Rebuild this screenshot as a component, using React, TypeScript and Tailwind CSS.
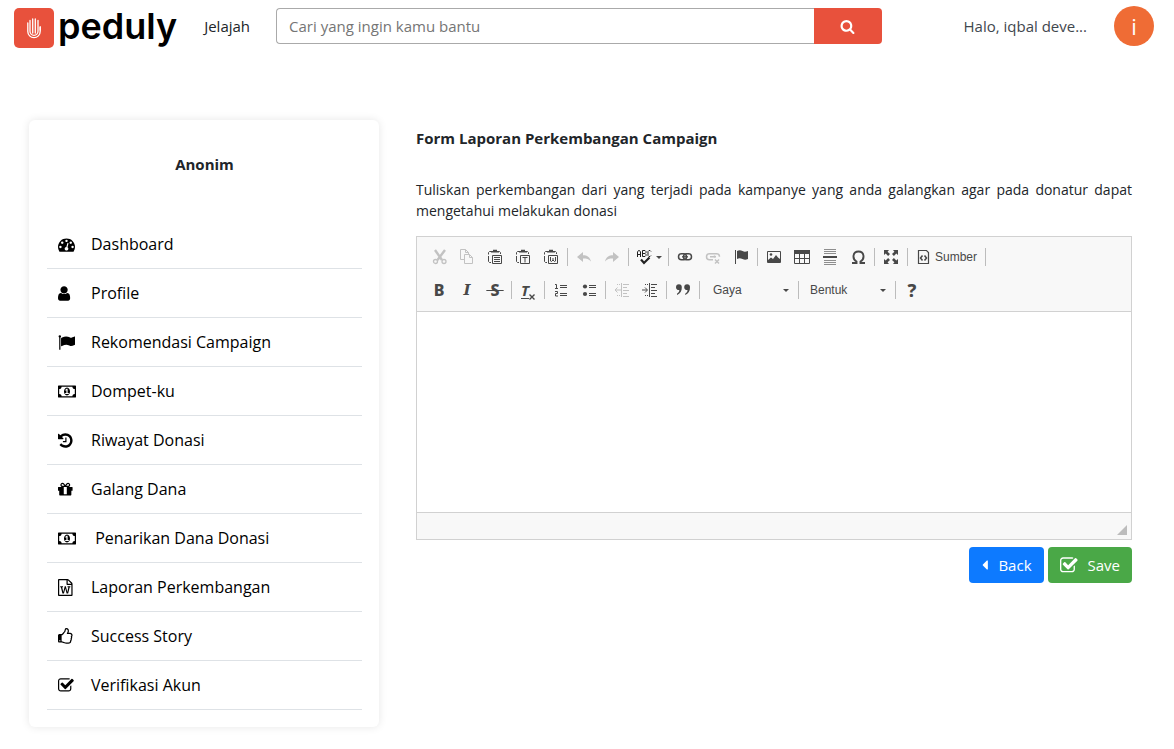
import React, { useState } from "react";

type IconProps = { d: string; className?: string; wide?: boolean };

function Glyph({ d, className = "h-4 w-4", wide }: IconProps) {
  return (
    <svg viewBox={wide ? "0 0 1920 1792" : "0 0 1792 1792"} className={className} fill="currentColor" aria-hidden="true">
      <path d={d} />
    </svg>
  );
}

const paths = {
  dashboard:
    "M384 1152q0-53-37.5-90.5t-90.5-37.5-90.5 37.5-37.5 90.5 37.5 90.5 90.5 37.5 90.5-37.5 37.5-90.5zm192-448q0-53-37.5-90.5t-90.5-37.5-90.5 37.5-37.5 90.5 37.5 90.5 90.5 37.5 90.5-37.5 37.5-90.5zm428 481l101-382q6-26-7.5-48.5t-38.5-29.5-48 6.5-30 39.5l-101 382q-60 5-107 43.5t-63 98.5q-20 77 20 146t117 89 146-20 89-117q16-60-6-117t-72-91zm660-33q0-53-37.5-90.5t-90.5-37.5-90.5 37.5-37.5 90.5 37.5 90.5 90.5 37.5 90.5-37.5 37.5-90.5zm-640-640q0-53-37.5-90.5t-90.5-37.5-90.5 37.5-37.5 90.5 37.5 90.5 90.5 37.5 90.5-37.5 37.5-90.5zm448 192q0-53-37.5-90.5t-90.5-37.5-90.5 37.5-37.5 90.5 37.5 90.5 90.5 37.5 90.5-37.5 37.5-90.5zm320 448q0 261-141 483-19 29-54 29h-1402q-35 0-54-29-141-221-141-483 0-182 71-348t191-286 286-191 348-71 348 71 286 191 191 286 71 348z",
  user: "M1280 1399q0 109-62.5 187t-150.5 78h-854q-88 0-150.5-78t-62.5-187q0-85 8.5-160.5t31.5-152 58.5-131 94-89 134.5-34.5q131 128 313 128t313-128q76 0 134.5 34.5t94 89 58.5 131 31.5 152 8.5 160.5zm-256-887q0 159-112.5 271.5t-271.5 112.5-271.5-112.5-112.5-271.5 112.5-271.5 271.5-112.5 271.5 112.5 112.5 271.5z",
  flag: "M320 256q0 72-64 110v1266q0 13-9.5 22.5t-22.5 9.5h-64q-13 0-22.5-9.5t-9.5-22.5v-1266q-64-38-64-110 0-53 37.5-90.5t90.5-37.5 90.5 37.5 37.5 90.5zm1472 64v763q0 25-12.5 38.5t-39.5 27.5q-215 116-369 116-61 0-123.5-22t-108.5-48-115.5-48-142.5-22q-192 0-464 146-17 9-33 9-26 0-45-19t-19-45v-742q0-32 31-55 21-14 79-43 236-120 421-120 107 0 200 29t219 88q38 19 88 19 54 0 117.5-21t110-47 88-47 54.5-21q26 0 45 19t19 45z",
  money:
    "M768 1152h384v-96h-128v-448h-114l-148 137 77 80q42-37 55-57h2v288h-128v96zm512-256q0 70-21 142t-59.5 134-101.5 101-138 39-138-39-101.5-101-59.5-134-21-142 21-142 59.5-134 101.5-101 138-39 138 39 101.5 101 59.5 134 21 142zm512 256v-512q-106 0-181-75t-75-181h-1152q0 106-75 181t-181 75v512q106 0 181 75t75 181h1152q0-106 75-181t181-75zm128-832v1152q0 26-19 45t-45 19h-1792q-26 0-45-19t-19-45v-1152q0-26 19-45t45-19h1792q26 0 45 19t19 45z",
  history:
    "M1536 896q0 156-61 298t-164 245-245 164-298 61q-172 0-327-72.5t-264-204.5q-7-10-6.5-22.5t8.5-20.5l137-138q10-9 25-9 16 2 23 12 73 95 179 147t225 52q104 0 198.5-40.5t163.5-109.5 109.5-163.5 40.5-198.5-40.5-198.5-109.5-163.5-163.5-109.5-198.5-40.5q-98 0-188 35.5t-160 101.5l137 138q31 30 14 69-17 40-59 40h-448q-26 0-45-19t-19-45v-448q0-42 40-59 39-17 69 14l130 129q107-101 244.5-156.5t284.5-55.5q156 0 298 61t245 164 164 245 61 298zm-640-288v448q0 14-9 23t-23 9h-320q-14 0-23-9t-9-23v-64q0-14 9-23t23-9h224v-352q0-14 9-23t23-9h64q14 0 23 9t9 23z",
  gift: "M928 1356v-716h-320v716q0 25 18 38.5t46 13.5h192q28 0 46-13.5t18-38.5zm-456-844h195l-126-161q-26-31-69-31-40 0-68 28t-28 68 28 68 68 28zm688-96q0-40-28-68t-68-28q-43 0-69 31l-125 161h194q40 0 68-28t28-68zm376 256v320q0 14-9 23t-23 9h-96v416q0 40-28 68t-68 28h-1088q-40 0-68-28t-28-68v-416h-96q-14 0-23-9t-9-23v-320q0-14 9-23t23-9h440q-93 0-158.5-65.5t-65.5-158.5 65.5-158.5 158.5-65.5q107 0 168 77l128 165 128-165q61-77 168-77 93 0 158.5 65.5t65.5 158.5-65.5 158.5-158.5 65.5h440q14 0 23 9t9 23z",
  word: "M1468 380q28 28 48 76t20 88v1152q0 40-28 68t-68 28h-1344q-40 0-68-28t-28-68v-1600q0-40 28-68t68-28h896q40 0 88 20t76 48zm-444-244v376h376q-10-29-22-41l-313-313q-12-12-41-22zm384 1528v-1024h-416q-40 0-68-28t-28-68v-416h-768v1536h1280zm-1175-896v107h70l164 661h159l128-485q7-20 10-46 2-16 2-24h4l3 24q1 3 3.5 20t5.5 26l128 485h159l164-661h70v-107h-300v107h90l-99 438q-5 20-7 46l-2 21h-4q0-3-.5-6.5t-1.5-8-1-6.5q-1-5-4-21t-5-25l-144-545h-114l-144 545q-2 9-4.5 24.5t-3.5 21.5l-4 21h-4l-2-21q-2-26-7-46l-99-438h90v-107h-300z",
  thumb:
    "M256 1344q0-26-19-45t-45-19-45 19-19 45 19 45 45 19 45-19 19-45zm1152-576q0-51-39-89.5t-89-38.5h-352q0-58 48-159.5t48-160.5q0-98-32-145t-128-47q-26 26-38 85t-30.5 125.5-59.5 109.5q-22 23-77 91-4 5-23 30t-31.5 41-34.5 42.5-40 44-38.5 35.5-40 27-35.5 9h-32v640h32q13 0 31.5 3t33 6.5 38 11 35 11.5 35.5 12.5 29 10.5q211 73 342 73h121q192 0 192-167 0-26-5-56 30-16 47.5-52.5t17.5-73.5-18-69q53-50 53-119 0-25-10-55.5t-25-47.5q32-1 53.5-47t21.5-81zm128-1q0 89-49 163 9 33 9 69 0 77-38 144 3 21 3 43 0 101-60 178 1 139-85 219.5t-227 80.5h-129q-96 0-189.5-22.5t-216.5-65.5q-116-40-138-40h-288q-53 0-90.5-37.5t-37.5-90.5v-640q0-53 37.5-90.5t90.5-37.5h274q36-24 137-155 58-75 107-128 24-25 35.5-85.5t30.5-126.5 62-108q39-37 90-37 84 0 151 32.5t102 101.5 35 186q0 93-48 192h176q104 0 180 76t76 179z",
  check:
    "M1408 930v318q0 119-84.5 203.5t-203.5 84.5h-832q-119 0-203.5-84.5t-84.5-203.5v-832q0-119 84.5-203.5t203.5-84.5h832q63 0 117 25 15 7 18 23 3 17-9 29l-49 49q-10 10-23 10-3 0-9-2-23-6-45-6h-832q-66 0-113 47t-47 113v832q0 66 47 113t113 47h832q66 0 113-47t47-113v-254q0-13 9-22l64-64q10-10 23-10 6 0 12 3 20 8 20 29zm231-489l-814 814q-24 24-57 24t-57-24l-430-430q-24-24-24-57t24-57l110-110q24-24 57-24t57 24l263 263 647-647q24-24 57-24t57 24l110 110q24 24 24 57t-24 57z",
  search:
    "M1216 832q0-185-131.5-316.5t-316.5-131.5-316.5 131.5-131.5 316.5 131.5 316.5 316.5 131.5 316.5-131.5 131.5-316.5zm512 832q0 52-38 90t-90 38q-54 0-90-38l-343-342q-179 124-399 124-143 0-273.5-55.5t-225-150-150-225-55.5-273.5 55.5-273.5 150-225 225-150 273.5-55.5 273.5 55.5 225 150 150 225 55.5 273.5q0 220-124 399l343 343q37 37 37 90z",
  caretLeft:
    "M1216 448v896q0 26-19 45t-45 19-45-19l-448-448q-19-19-19-45t19-45l448-448q19-19 45-19t45 19 19 45z",
};

const menu: { label: string; d: string; wide?: boolean }[] = [
  { label: "Dashboard", d: paths.dashboard },
  { label: "Profile", d: paths.user },
  { label: "Rekomendasi Campaign", d: paths.flag },
  { label: "Dompet-ku", d: paths.money, wide: true },
  { label: "Riwayat Donasi", d: paths.history },
  { label: "Galang Dana", d: paths.gift },
  { label: "\u00a0Penarikan Dana Donasi", d: paths.money, wide: true },
  { label: "Laporan Perkembangan", d: paths.word },
  { label: "Success Story", d: paths.thumb },
  { label: "Verifikasi Akun", d: paths.check },
];

function Svg16({ children }: { children: React.ReactNode }) {
  return (
    <svg viewBox="0 0 16 16" className="h-4 w-4" fill="none" stroke="currentColor" aria-hidden="true">
      {children}
    </svg>
  );
}

function Tool({ label, disabled, children }: { label: string; disabled?: boolean; children: React.ReactNode }) {
  return (
    <button
      type="button"
      aria-label={label}
      disabled={disabled}
      className="flex h-7 w-7 items-center justify-center text-[#484848] disabled:text-[#c2c2c2]"
    >
      {children}
    </button>
  );
}

function Sep() {
  return <span className="mr-0.5 ml-0.5 h-[18px] w-px bg-[#bcbcbc]" />;
}

function Arrow() {
  return (
    <svg viewBox="0 0 6 3" className="h-[3px] w-1.5" fill="#484848" aria-hidden="true">
      <path d="M0 0h6L3 3z" />
    </svg>
  );
}

function Clipboard({ children }: { children?: React.ReactNode }) {
  return (
    <Svg16>
      <path d="M4 2.500H2.500l-1 1v2M1.500 7v5.500l1 1H4M11 2.500h1.500l1 1V5" />
      <path d="M4 3.500V2h2V.8h4V2h2v1.500z" fill="currentColor" stroke="none" />
      <path d="M5.500 6.500h9v8h-9z" />
      {children}
    </Svg16>
  );
}

function Combo({ label }: { label: string }) {
  return (
    <div className="relative flex h-7 w-[92px] items-center">
      <select
        aria-label={label}
        className="h-[26px] w-full appearance-none bg-transparent pl-[9px] font-['Liberation_Sans',sans-serif] text-xs text-[#484848]"
      >
        <option>{label}</option>
      </select>
      <span className="pointer-events-none absolute right-[7px]">
        <Arrow />
      </span>
    </div>
  );
}

function Indent({ out }: { out?: boolean }) {
  return (
    <Svg16>
      <path d="M9 2.500h6M9 5.500h4M9 8.500h6M9 11.500h4M9 14.500h6" />
      <path d="M7.500 1v14" />
      <path d="M3 2.500h3M3 13.500h3" strokeDasharray="1 1" />
      <path d={out ? "M1 8h6M3.500 5.500L1 8l2.500 2.500" : "M0 8h5M3 5.500L5.500 8 3 10.500"} />
    </Svg16>
  );
}

function Toolbar() {
  return (
    <div className="flex flex-col gap-[5px] border-b border-[#d1d1d1] bg-[#f8f8f8] px-2 pt-1.5 pb-[7px]">
      <div className="flex h-7 items-center">
        <Tool label="Potong" disabled>
          <Svg16>
            <path d="M4 1l7 10M14 1L6.500 11" strokeWidth="2.400" />
            <circle cx="4.500" cy="12.500" r="2" strokeWidth="1.300" />
            <circle cx="13" cy="12.500" r="2" strokeWidth="1.300" />
          </Svg16>
        </Tool>
        <Tool label="Salin" disabled>
          <Svg16>
            <path d="M5 10.500H1.500V.5h5l3 3V5M6.500 .5v3h3" />
            <path d="M5.500 5.500h5l3 3v6h-8zM10.500 5.500v3h3" />
          </Svg16>
        </Tool>
        <Tool label="Tempel">
          <Clipboard>
            <path d="M7 8.500h6M7 10.500h6M7 12.500h6" />
          </Clipboard>
        </Tool>
        <Tool label="Tempel sebagai teks polos">
          <Clipboard>
            <path d="M7.500 8.500h5M10 8.500v5" />
          </Clipboard>
        </Tool>
        <Tool label="Tempel dari Word">
          <Clipboard>
            <path d="M7.500 8v4l1 .5 1.500-1.500 1.500 1.500 1-.5V8M10 9v2" />
          </Clipboard>
        </Tool>
        <Sep />
        <Tool label="Batal perintah terakhir" disabled>
          <Svg16>
            <path d="M1 8l6-5v3.200c4 0 7 1.800 8 6.300-2-2.500-4.500-3-8-3V13z" fill="currentColor" stroke="none" />
          </Svg16>
        </Tool>
        <Tool label="Kembalikan perintah terakhir" disabled>
          <Svg16>
            <path d="M15 8L9 3v3.200c-4 0-7 1.800-8 6.300 2-2.500 4.500-3 8-3V13z" fill="currentColor" stroke="none" />
          </Svg16>
        </Tool>
        <Sep />
        <button type="button" aria-label="Periksa Ejaan" className="flex h-7 w-[35px] items-center gap-[3px] pl-1.5 text-[#222]">
          <Svg16>
            <path d="M.5 8V3l1-1.500h1l1 1.500v5M.5 5.500h3M5.500 1.500v6H8l1-1v-1l-1-1 1-1v-1l-1-1H5.500M5.500 4.500H8M14 2.500l-1-1h-1l-1 1v4l1 1h1l1-1" />
            <path d="M4 10.500l3 3.500 5.500-5.500" strokeWidth="2.200" />
          </Svg16>
          <Arrow />
        </button>
        <Sep />
        <Tool label="Tautan">
          <Svg16>
            <rect x="1.500" y="4.800" width="8" height="6" rx="3" strokeWidth="1.500" />
            <rect x="6.500" y="4.800" width="8" height="6" rx="3" strokeWidth="1.500" />
            <path d="M5 7.800h6" strokeWidth="1.300" />
          </Svg16>
        </Tool>
        <Tool label="Hapus Tautan" disabled>
          <Svg16>
            <path d="M8 10.800H4.500a3 3 0 010-6h7a3 3 0 013 3M9.500 6.500v2" strokeWidth="1.500" />
            <path d="M5 7.800h6M10 10.500l4 4M14 10.500l-4 4" strokeWidth="1.500" />
          </Svg16>
        </Tool>
        <Tool label="Jangkar">
          <Svg16>
            <path d="M2.500 1v14" />
            <path d="M4 2c2-1 3.500-1 5.500 0s3 .8 5.500 0v8c-2.500 1-3.500.8-5.500 0S6 9 4 10z" fill="currentColor" stroke="none" />
          </Svg16>
        </Tool>
        <Sep />
        <Tool label="Gambar">
          <Svg16>
            <path d="M1.500 2.500h13v11h-13z" />
            <circle cx="5" cy="5.500" r="1.300" fill="currentColor" stroke="none" />
            <path d="M2 13v-2l3-2.500 2 1.500 3-4 2 2.500L14 10v3z" fill="currentColor" stroke="none" />
          </Svg16>
        </Tool>
        <Tool label="Tabel">
          <Svg16>
            <path d="M.5 1.500h15v13H.5zM.5 9.500h15M5.500 5v9M10.500 5v9" />
            <path d="M0 1h16v4H0z" fill="currentColor" stroke="none" />
          </Svg16>
        </Tool>
        <Tool label="Sisip Garis Horisontal">
          <Svg16>
            <path d="M2 .5h12M2 2.500h12M2 4.500h12M2 11.500h12M2 13.500h12M2 15.500h12" strokeOpacity="0.600" />
            <path d="M1 8h14" strokeWidth="2" />
          </Svg16>
        </Tool>
        <Tool label="Sisip Karakter Khusus">
          <Svg16>
            <path d="M2 14h4.500v-1.500C2 10 2.500 2.500 8.500 2.500s6.500 7.500 2 10V14H15" strokeWidth="1.900" />
          </Svg16>
        </Tool>
        <Sep />
        <Tool label="Memperbesar">
          <Svg16>
            <path d="M1 1h5L4.600 2.700 7 5.100 5.100 7 2.700 4.600 1 6zM15 1h-5l1.400 1.700L9 5.100 10.900 7l2.400-2.400L15 6zM1 15h5l-1.400-1.700L7 10.900 5.100 9l-2.400 2.400L1 10zM15 15h-5l1.400-1.700L9 10.900 10.900 9l2.400 2.400L15 10z" fill="currentColor" stroke="none" />
          </Svg16>
        </Tool>
        <Sep />
        <button
          type="button"
          className="flex h-7 items-center gap-[3px] px-1.5 font-['Liberation_Sans',sans-serif] text-xs text-[#484848]"
        >
          <Svg16>
            <path d="M2.500 1.500h8l2 2v11h-10z" strokeWidth="1.200" />
            <path d="M6.500 6.500L4.500 9l2 2.500M8.500 6.500l2 2.500-2 2.500" strokeWidth="1.500" />
          </Svg16>
          Sumber
        </button>
        <Sep />
      </div>
      <div className="flex h-7 items-center">
        <Tool label="Huruf Tebal">
          <span className="font-['Noto_Sans',sans-serif] text-base leading-4 font-extrabold">B</span>
        </Tool>
        <Tool label="Huruf Miring">
          <span className="font-['DejaVu_Serif',serif] text-[15px] leading-4 font-bold italic">I</span>
        </Tool>
        <Tool label="Coretan Tengah">
          <span className="font-['Noto_Sans',sans-serif] text-base leading-7 font-extrabold line-through decoration-1">
            &nbsp;S&nbsp;
          </span>
        </Tool>
        <Sep />
        <Tool label="Hapus Format">
          <span className="flex items-end">
            <span className="font-['Noto_Sans',sans-serif] text-[15px] leading-7 font-bold italic underline decoration-1 underline-offset-2">
              T
            </span>
            <svg viewBox="0 0 6 6" className="mb-1 h-1.5 w-1.5" fill="none" stroke="currentColor" aria-hidden="true">
              <path d="M.5 .5l5 5M5.500 .5l-5 5" strokeWidth="1.400" />
            </svg>
          </span>
        </Tool>
        <Sep />
        <Tool label="Sisip/Hapus Daftar Bernomor">
          <Svg16>
            <path d="M7 3.500h7M7 5.500h7M7 11.500h7M7 13.500h7" />
            <path d="M2 2.500h1.500V7M2 6.500h3M2 9.500h2.500v2h-2v2.500H5" />
          </Svg16>
        </Tool>
        <Tool label="Sisip/Hapus Daftar Bullet">
          <Svg16>
            <path d="M8 3.500h7M8 5.500h7M8 11.500h7M8 13.500h7" />
            <circle cx="4" cy="4.500" r="2.100" fill="currentColor" stroke="none" />
            <circle cx="4" cy="12" r="2.100" fill="currentColor" stroke="none" />
          </Svg16>
        </Tool>
        <Sep />
        <Tool label="Kurangi Indentasi" disabled>
          <Indent out />
        </Tool>
        <Tool label="Tingkatkan Indentasi">
          <Indent />
        </Tool>
        <Sep />
        <Tool label="Kutipan Blok">
          <Svg16>
            <path d="M1 5.200a2.900 2.900 0 115.800 0C7 9 5.200 11.500 2 13v-1.300C3.800 10.500 4.300 9.500 4.300 8 2.500 8.300 1 7 1 5.200zM9.200 5.200a2.900 2.900 0 115.800 0c.2 3.800-1.600 6.300-4.800 7.800v-1.300c1.800-1.200 2.300-2.200 2.300-3.700-1.800.3-3.300-1-3.300-2.800z" fill="currentColor" stroke="none" />
          </Svg16>
        </Tool>
        <Sep />
        <div className="flex items-center pl-0.5">
          <Combo label="Gaya" />
          <Sep />
          <Combo label="Bentuk" />
        </div>
        <Sep />
        <Tool label="Tentang CKEditor">
          <span className="font-['Noto_Sans',sans-serif] text-lg leading-4 font-extrabold">?</span>
        </Tool>
      </div>
    </div>
  );
}

function Header() {
  return (
    <header className="flex h-[52px] items-center pr-5 pl-3.5">
      <a href="#home" className="flex items-start gap-1 pt-1">
        <svg viewBox="0 0 40 40" className="h-10 w-10" fill="none" aria-hidden="true">
          <rect width="40" height="40" rx="5" fill="#e8513c" />
          <g stroke="#fff" strokeWidth="1.300" strokeLinecap="round">
            <path d="M13.800 15v8.500a6.200 6.200 0 0012.400 0V19" />
            <path d="M16 12.500v10.800a4 4 0 008 0V12.500" />
            <path d="M18.700 11v14M21.300 11v14" />
            <path d="M26.200 19v3" />
          </g>
        </svg>
        <span className="font-['Inter',sans-serif] text-4xl leading-9 font-semibold text-black">peduly</span>
      </a>
      <a href="#jelajah" className="ml-[27px] text-[15px]">
        Jelajah
      </a>
      <form role="search" className="ml-[26px] flex h-9 flex-1" onSubmit={(e) => e.preventDefault()}>
        <input
          type="text"
          aria-label="Cari"
          placeholder="Cari yang ingin kamu bantu"
          className="min-w-0 flex-1 rounded-l border border-r-0 border-[#aaa] px-3 text-[15px] placeholder:text-[#757575]"
        />
        <button type="submit" aria-label="Cari" className="flex w-[68px] items-center justify-center rounded-r bg-[#e8513c] text-white">
          <Glyph d={paths.search} className="h-[15px] w-[15px]" />
        </button>
      </form>
      <span className="ml-[82px] text-[15px] text-[#3f474e]">Halo, iqbal deve...</span>
      <span className="ml-[27px] flex h-10 w-10 items-center justify-center rounded-full bg-[#ef6c35] text-[22px] text-white">
        i
      </span>
    </header>
  );
}

export default function App() {
  const [report, setReport] = useState("");
  return (
    <div className="font-['Open_Sans',sans-serif] text-[#212529]">
      <Header />
      <main className="flex items-start gap-[37px] pt-[68px] pr-[42px] pb-5 pl-[29px]">
        <aside className="w-[350px] shrink-0 rounded-md bg-white pr-[17px] pb-[17px] pl-[18px] shadow-[0_0_8px_rgba(0,0,0,0.1)]">
          <h2 className="pt-[33px] pb-[45px] text-center text-[15px] leading-[22px] font-bold">Anonim</h2>
          <nav>
            <ul>
              {menu.map((m) => (
                <li key={m.label} className="border-b border-[#dee2e6]">
                  <a href="#menu" className="flex h-12 items-center pl-[11px] text-base text-black">
                    <span className="flex w-[33px] shrink-0">
                      <Glyph d={m.d} wide={m.wide} className={m.wide ? "h-[17px] w-[18px]" : "h-[17px] w-[17px]"} />
                    </span>
                    {m.label}
                  </a>
                </li>
              ))}
            </ul>
          </nav>
        </aside>
        <section className="min-w-0 flex-1">
          <h1 className="pt-[7px] text-[15px] leading-[22px] font-bold">Form Laporan Perkembangan Campaign</h1>
          <p className="mt-[30px] text-justify text-sm leading-[21px]">
            Tuliskan perkembangan dari yang terjadi pada kampanye yang anda galangkan agar pada donatur dapat mengetahui
            melakukan donasi
          </p>
          <div className="mt-[15px] border border-[#d1d1d1]">
            <Toolbar />
            <textarea
              aria-label="Isi laporan"
              value={report}
              onChange={(e) => setReport(e.target.value)}
              className="block h-[200px] w-full resize-none p-5 text-sm outline-none"
            />
            <div className="flex h-[27px] items-end justify-end border-t border-[#d1d1d1] bg-[#f8f8f8] p-1">
              <svg viewBox="0 0 10 10" className="h-2.5 w-2.5" fill="#bcbcbc" aria-hidden="true">
                <path d="M10 0v10H0z" />
              </svg>
            </div>
          </div>
          <div className="mt-[7px] flex justify-end gap-1 text-[15px] text-white">
            <button type="button" className="flex h-9 items-center gap-[9px] rounded bg-[#0d7aff] px-3">
              <svg viewBox="448 0 896 1792" className="h-4 w-2" fill="currentColor" aria-hidden="true">
                <path d={paths.caretLeft} />
              </svg>
              Back
            </button>
            <button type="button" className="flex h-9 items-center gap-[9px] rounded bg-[#4aa847] px-3">
              <Glyph d={paths.check} className="h-[19px] w-[19px]" />
              Save
            </button>
          </div>
        </section>
      </main>
    </div>
  );
}
